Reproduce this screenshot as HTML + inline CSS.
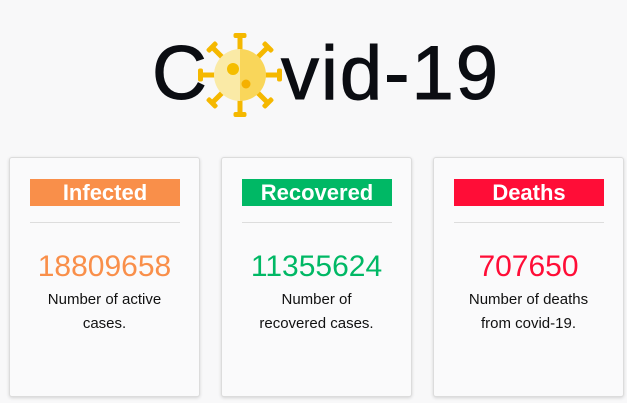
<!DOCTYPE html>
<html><head><meta charset="utf-8"><style>
body{margin:0;width:627px;height:403px;background:#f8f8f9;font-family:"Liberation Sans",sans-serif;position:relative;overflow:hidden}
.t{position:absolute;top:24px;font-size:76px;line-height:100px;color:#0b0d12;letter-spacing:2px;-webkit-text-stroke:1px #0b0d12}
.card{position:absolute;top:157px;width:189px;height:238px;background:#fafafb;border:1px solid #dcdcdc;border-radius:3px;box-shadow:0 1px 3px rgba(0,0,0,.15);text-align:center}
.h{position:absolute;left:20px;top:21px;width:150px;height:27px;color:#fff;font-weight:bold;font-size:22px;line-height:27px}
.hr{position:absolute;left:20px;top:64px;width:150px;border-top:1px solid #ddd}
.n{position:absolute;left:0;right:0;top:89px;font-size:30px;line-height:40px}
.d{position:absolute;left:28px;right:28px;top:130px;font-size:15px;line-height:24px;color:#111}
</style></head><body>
<div class="t" style="left:152px">C</div>
<div class="t" style="left:281px">vid-19</div>
<svg style="position:absolute;left:195px;top:30px" width="90" height="90" viewBox="-45 -45 90 90">
<g fill="#f5b800">
<g id="s"><rect x="-2.5" y="-38" width="5" height="13"/><rect x="-6.5" y="-42" width="13" height="5" rx="2"/></g>
<use href="#s" transform="rotate(45)"/><use href="#s" transform="rotate(90)"/><use href="#s" transform="rotate(135)"/><use href="#s" transform="rotate(180)"/><use href="#s" transform="rotate(225)"/><use href="#s" transform="rotate(270)"/><use href="#s" transform="rotate(315)"/>
</g>
<path d="M0,-26 A26,26 0 0,0 0,26Z" fill="#faeaa6"/>
<path d="M0,-26 A26,26 0 0,1 0,26Z" fill="#f9d65a"/>
<circle cx="-7" cy="-6" r="6" fill="#f5be00"/>
<circle cx="6" cy="9" r="4.5" fill="#f5b000"/>
</svg>
<div class="card" style="left:9px"><div class="h" style="background:#f98f4a">Infected</div><div class="hr"></div><div class="n" style="color:#f98f4a">18809658</div><div class="d">Number of active cases.</div></div>
<div class="card" style="left:221px"><div class="h" style="background:#00b865">Recovered</div><div class="hr"></div><div class="n" style="color:#00b865">11355624</div><div class="d">Number of recovered cases.</div></div>
<div class="card" style="left:433px"><div class="h" style="background:#ff0d37">Deaths</div><div class="hr"></div><div class="n" style="color:#ff0d37">707650</div><div class="d">Number of deaths from covid-19.</div></div>
</body></html>
